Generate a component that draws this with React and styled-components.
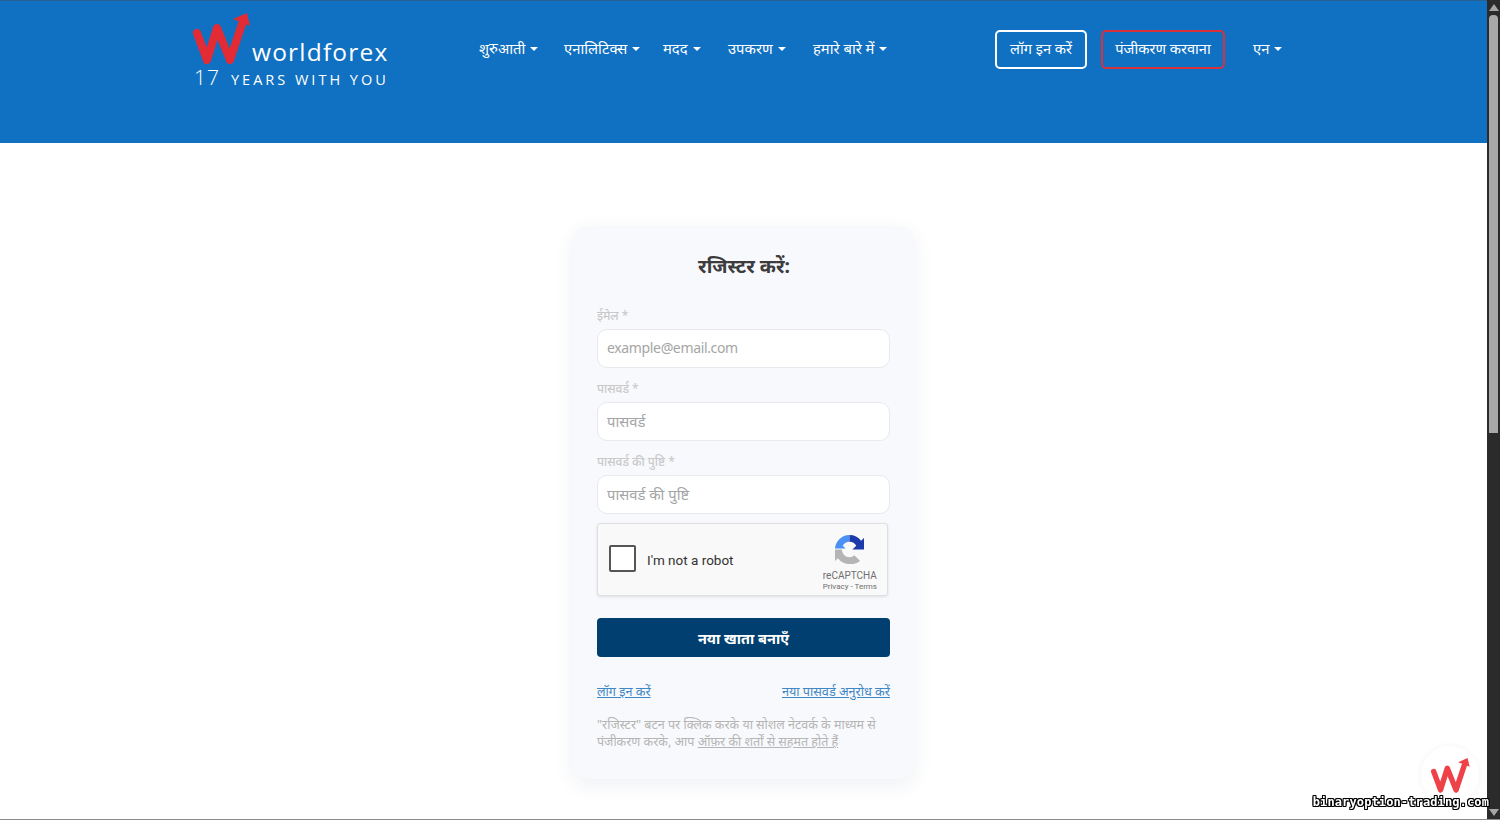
import React from "react";
import styled, { createGlobalStyle } from "styled-components";

const Global = createGlobalStyle`
  html, body { margin: 0; padding: 0; height: 820px; overflow: hidden; background: #fff; }
  * { box-sizing: border-box; }
  body { font-family: "Noto Sans", "Open Sans", "Liberation Sans", sans-serif; }
`;

const Shell = styled.div`
  display: flex;
  height: 820px;
  border-bottom: 1px solid #8a8a8a;
  overflow: hidden;
`;
const Page = styled.div`
  flex: 1;
  min-width: 0;
  overflow: hidden;
`;
const Header = styled.header`
  height: 143px;
  background: #1070c2;
  border-top: 1px solid #2a5f8f;
  padding: 10px 0 0 190px;
  display: flex;
  align-items: flex-start;
  color: #fff;
`;
const Logo = styled.div`
  width: 200px;
  display: flex;
  flex-direction: column;
  flex: none;
`;
const LogoTop = styled.div`
  display: flex;
  align-items: flex-end;
  height: 55px;
`;
const LogoName = styled.span`
  font: 500 24.5px/28px "Open Sans", sans-serif;
  letter-spacing: 1.2px;
`;
const LogoSub = styled.div`
  display: flex;
  align-items: baseline;
  margin: 1px 0 0 4px;
  font: 400 14.5px/20px "Open Sans", sans-serif;
  letter-spacing: 3px;
  white-space: nowrap;
`;
const LogoYears = styled.span`
  font-size: 21px;
  font-weight: 300;
  letter-spacing: 1px;
  margin-right: 11px;
`;
const Nav = styled.nav`
  display: grid;
  grid-template-columns: 85px 99px 65px 85px auto;
  margin: 25px 0 0 89px;
  width: 516px;
  flex: none;
`;
const NavItem = styled.span`
  display: inline-flex;
  align-items: center;
  font-size: 14.8px;
  line-height: 24px;
  white-space: nowrap;
`;
const Caret = styled.i`
  display: inline-block;
  margin-left: 5px;
  margin-top: 2px;
  border-top: 4px solid #fff;
  border-left: 4px solid transparent;
  border-right: 4px solid transparent;
`;
const AuthButton = styled.span`
  display: inline-flex;
  align-items: center;
  justify-content: center;
  flex: none;
  width: ${(p) => p.$w}px;
  height: 39px;
  margin: 19px 14px 0 0;
  padding-bottom: 3px;
  border: 2px solid ${(p) => p.$border};
  border-radius: 5px;
  font-size: 14.6px;
  white-space: nowrap;
`;
const Lang = styled(NavItem)`
  margin: 25px 0 0 14px;
`;
const Main = styled.main`
  display: flex;
  justify-content: center;
  padding-top: 83px;
`;
const Card = styled.section`
  width: 341px;
  height: 553px;
  flex: none;
  background: #f8f9fc;
  border-radius: 14px;
  box-shadow: 0 6px 20px rgba(40, 60, 100, 0.08);
  padding: 24px 22px 0 24px;
`;
const Title = styled.h2`
  margin: 0 0 22px -1px;
  text-align: center;
  font-size: 19.4px;
  line-height: 32px;
  font-weight: 700;
  color: #3c3c3c;
`;
const Field = styled.div`
  margin-bottom: 9px;
`;
const Label = styled.label`
  display: block;
  font-size: 12px;
  line-height: 16px;
  height: 25px;
  padding-top: 4px;
  font-weight: 500;
  color: #c9c9c9;
`;
const Input = styled.input`
  display: block;
  width: 293px;
  height: 39px;
  border: 1px solid #e7e9ee;
  border-radius: 10px;
  background: #fff;
  padding: 0 10px 2px 9px;
  font: 400 ${(p) => (p.$latin ? "14px" : "14.8px")} "Noto Sans", "Open Sans", sans-serif;
  letter-spacing: ${(p) => (p.$latin ? "-0.35px" : "0")};
  &::placeholder { color: #a5a5a5; opacity: 1; }
`;
const Captcha = styled.div`
  display: flex;
  align-items: center;
  width: 291px;
  height: 73px;
  background: #f9f9f9;
  border: 1px solid #dfdfdf;
  border-radius: 3px;
  box-shadow: 0 1px 3px rgba(0, 0, 0, 0.1);
  padding: 0 10px 0 11px;
`;
const CheckBox = styled.span`
  width: 27px;
  height: 27px;
  flex: none;
  background: #fff;
  border: 2px solid #555;
  border-radius: 2px;
  margin-top: -3px;
`;
const CaptchaText = styled.span`
  margin-left: 11px;
  flex: 1;
  font: 400 13.5px Roboto, sans-serif;
  color: #333;
`;
const CaptchaBrand = styled.div`
  display: flex;
  flex-direction: column;
  align-items: center;
  align-self: flex-start;
  padding-top: 11px;
  color: #6f6f6f;
  font: 400 10px/12px Roboto, sans-serif;
`;
const CaptchaName = styled.span`
  margin-top: 6px;
`;
const CaptchaLinks = styled.span`
  margin-top: -1px;
  font-size: 8px;
  line-height: 11px;
`;
const Submit = styled.button`
  display: block;
  width: 293px;
  height: 39px;
  margin-top: 22px;
  border: 0;
  border-radius: 4px;
  background: #003f70;
  color: #fff;
  font: 700 14.5px "Noto Sans", sans-serif;
`;
const LinkRow = styled.div`
  display: flex;
  justify-content: space-between;
  width: 293px;
  margin-top: 24px;
`;
const Link = styled.a`
  font-size: 12.65px;
  line-height: 20px;
  color: #3f87c4;
  text-decoration: underline;
`;
const Terms = styled.p`
  width: 293px;
  margin: 15px 0 0;
  font-size: 12.5px;
  line-height: 17px;
  color: #b5b5b5;
`;
const TermsLink = styled.span`
  text-decoration: underline;
`;
const Scrollbar = styled.aside`
  width: 13px;
  flex: none;
  background: #2b2b2b;
  display: flex;
  flex-direction: column;
  align-items: center;
  justify-content: space-between;
  padding: 4px 0 3px;
`;
const ScrollTrack = styled.div`
  display: flex;
  flex-direction: column;
  align-items: center;
  gap: 4px;
`;
const Arrow = styled.i`
  border-left: 5px solid transparent;
  border-right: 5px solid transparent;
  ${(p) => (p.$down ? "border-top: 7px solid #a5a5a5;" : "border-bottom: 7px solid #a5a5a5;")}
`;
const Thumb = styled.div`
  width: 9px;
  height: 418px;
  background: #a8a8a8;
  border-radius: 4px 4px 0 0;
`;
const ChatBadge = styled.div`
  position: fixed;
  left: 1421px;
  top: 746px;
  width: 58px;
  height: 58px;
  border-radius: 50%;
  background: #fff;
  box-shadow: 0 0 6px rgba(0, 0, 0, 0.05);
  display: flex;
  align-items: center;
  justify-content: center;
`;
const Watermark = styled.div`
  position: fixed;
  right: 11px;
  top: 793px;
  font: 700 12px/18px "DejaVu Sans Mono", monospace;
  letter-spacing: 0.12px;
  color: #fff;
  text-shadow: -1px -1px 0 #000, 1px -1px 0 #000, -1px 1px 0 #000, 1px 1px 0 #000, 0 1px 0 #000, 0 -1px 0 #000, 1px 0 0 #000, -1px 0 0 #000;
  white-space: nowrap;
`;

const WMark = ({ width, height, color, stroke = 7 }) => (
  <svg width={width} height={height} viewBox="0 0 62 56" aria-hidden="true">
    <path d="M7 23 L17 50 L27 18 L40 50 L52 14" fill="none" stroke={color} strokeWidth={stroke} strokeLinecap="round" strokeLinejoin="round" />
    <path d="M43 9 L57 3 L60 16 Z" fill={color} />
  </svg>
);

const RecaptchaIcon = () => (
  <svg width="29" height="29" viewBox="0 0 30 30" aria-hidden="true">
    <path d="M0 15 A15 15 0 0 1 15 0 V7 A8 8 0 0 0 8 11 L11 14 H0 Z" fill="#4a90f5" />
    <path d="M15 0 A15 15 0 0 1 27 6 L30 3 V15 H18 L22 11 A8 8 0 0 0 15 7 Z" fill="#1c3aa9" />
    <path d="M0 15 H7 A8 8 0 0 0 15 23 A8 8 0 0 0 20 21 L26 27 A15 15 0 0 1 15 30 A15 15 0 0 1 3 24 L0 27 Z" fill="#b5b5b5" />
  </svg>
);

const navItems = ["शुरुआती", "एनालिटिक्स", "मदद", "उपकरण", "हमारे बारे में"];

export default function App() {
  return (
    <>
      <Global />
      <Shell>
        <Page>
          <Header>
            <Logo>
              <LogoTop>
                <WMark width={62} height={56} color="#e32b35" stroke={8} />
                <LogoName>worldforex</LogoName>
              </LogoTop>
              <LogoSub>
                <LogoYears>17</LogoYears>YEARS WITH YOU
              </LogoSub>
            </Logo>
            <Nav>
              {navItems.map((n) => (
                <NavItem key={n}>
                  {n}
                  <Caret />
                </NavItem>
              ))}
            </Nav>
            <AuthButton $w={92} $border="#fff">लॉग इन करें</AuthButton>
            <AuthButton $w={124} $border="#d8333c">पंजीकरण करवाना</AuthButton>
            <Lang>
              एन
              <Caret />
            </Lang>
          </Header>
          <Main>
            <Card>
              <Title>रजिस्टर करें:</Title>
              <Field>
                <Label>ईमेल *</Label>
                <Input $latin placeholder="example@email.com" readOnly />
              </Field>
              <Field>
                <Label>पासवर्ड *</Label>
                <Input placeholder="पासवर्ड" readOnly />
              </Field>
              <Field>
                <Label>पासवर्ड की पुष्टि *</Label>
                <Input placeholder="पासवर्ड की पुष्टि" readOnly />
              </Field>
              <Captcha>
                <CheckBox />
                <CaptchaText>I'm not a robot</CaptchaText>
                <CaptchaBrand>
                  <RecaptchaIcon />
                  <CaptchaName>reCAPTCHA</CaptchaName>
                  <CaptchaLinks>Privacy - Terms</CaptchaLinks>
                </CaptchaBrand>
              </Captcha>
              <Submit>नया खाता बनाएँ</Submit>
              <LinkRow>
                <Link>लॉग इन करें</Link>
                <Link>नया पासवर्ड अनुरोध करें</Link>
              </LinkRow>
              <Terms>
                "रजिस्टर" बटन पर क्लिक करके या सोशल नेटवर्क के माध्यम से पंजीकरण करके, आप{" "}
                <TermsLink>ऑफ़र की शर्तों से सहमत होते हैं</TermsLink>
              </Terms>
            </Card>
          </Main>
        </Page>
        <Scrollbar>
          <ScrollTrack>
            <Arrow />
            <Thumb />
          </ScrollTrack>
          <Arrow $down />
        </Scrollbar>
      </Shell>
      <ChatBadge>
        <WMark width={42} height={38} color="#ee4148" stroke={8} />
      </ChatBadge>
      <Watermark>binaryoption-trading.com</Watermark>
    </>
  );
}
